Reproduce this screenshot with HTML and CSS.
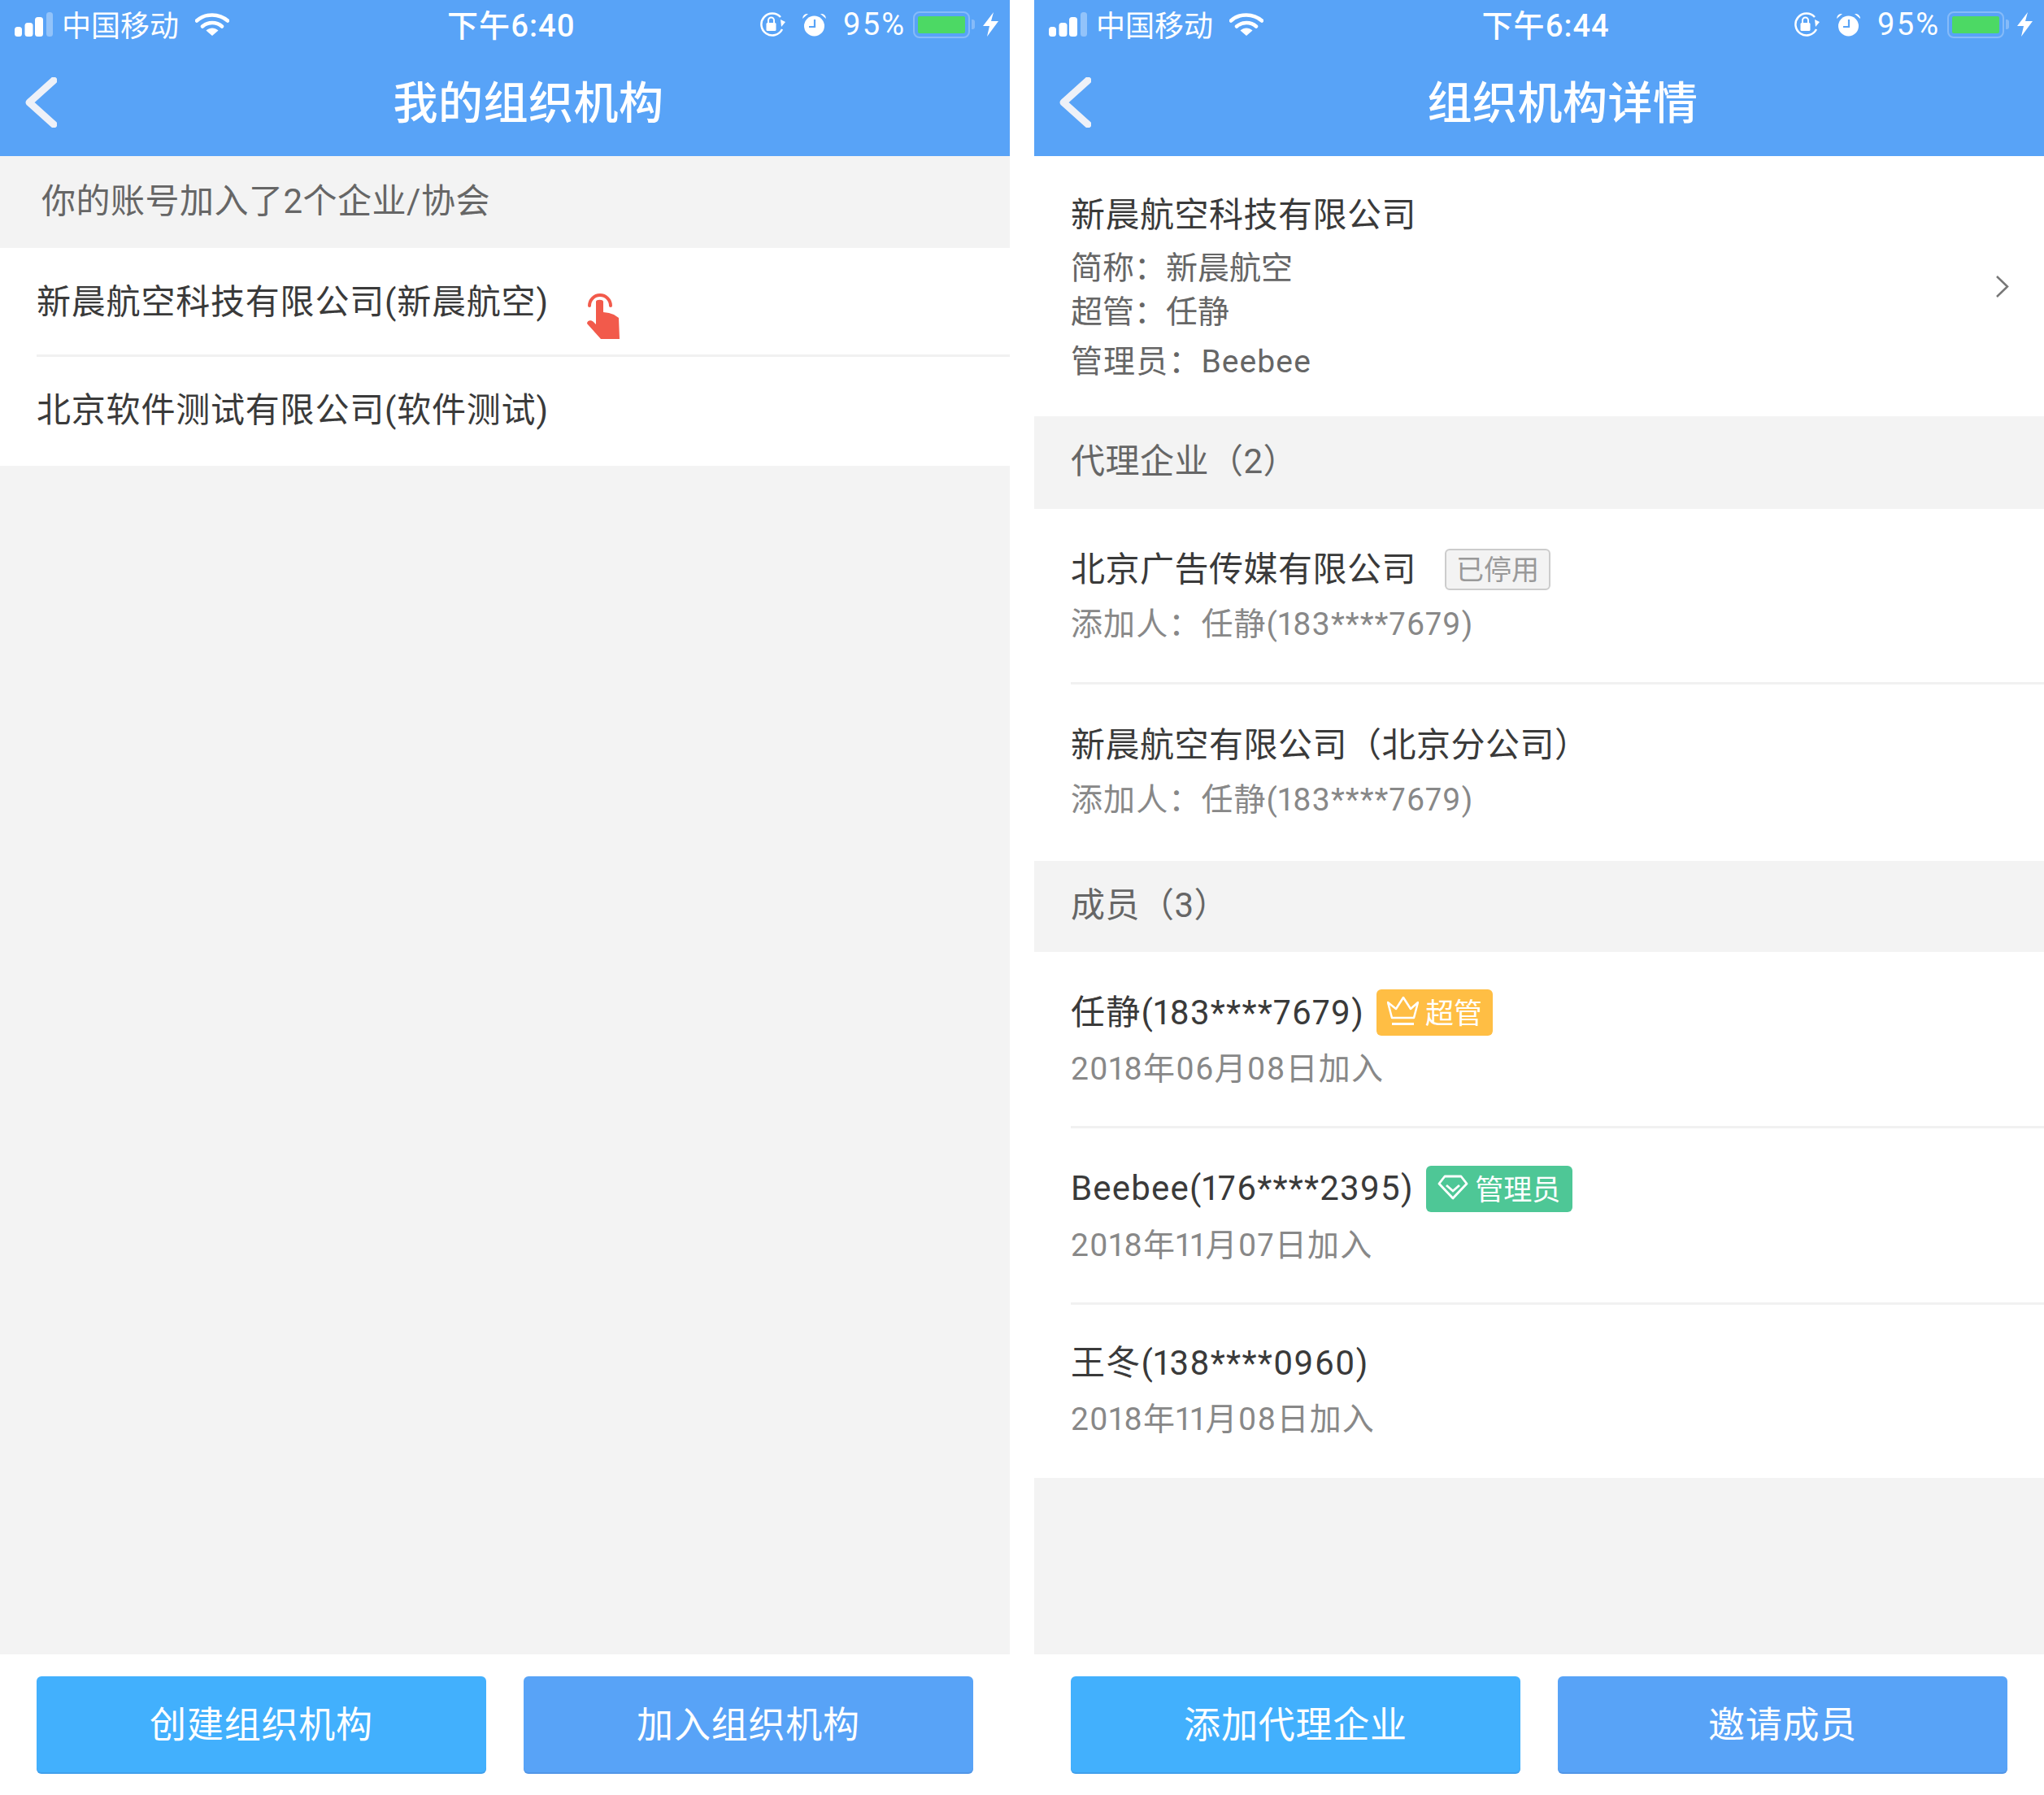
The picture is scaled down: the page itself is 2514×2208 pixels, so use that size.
FILE: index.html
```html
<!DOCTYPE html>
<html lang="zh-CN">
<head>
    <meta charset="UTF-8">
    <title>组织机构</title>
    <link rel="stylesheet" href="styles.css">
</head>
<body>
    <!-- 我的组织机构 -->
    <div class="phone">
        <div class="top-bar">
            <div class="status-bar">
                <div class="status-left">
                    <svg class="signal" width="47" height="30" viewBox="0 0 47 30"><rect x="0" y="18" width="9" height="12" rx="3.5" fill="#fff"/><rect x="12.500" y="13" width="10" height="17" rx="3.500" fill="#fff"/><rect x="25" y="6" width="10" height="24" rx="3.500" fill="#fff"/><rect x="39" y="0" width="8" height="30" rx="3.500" fill="#fff" opacity="0.35"/></svg>
                    <span class="carrier">中国移动</span>
                    <svg class="wifi" width="42" height="28" viewBox="0 0 42 28"><path d="M2 9.500C12.500 0 29.500 0 40 9.500" fill="none" stroke="#fff" stroke-width="4.500" stroke-linecap="round"/><path d="M9 16.500C15.500 10.500 26.500 10.500 33 16.500" fill="none" stroke="#fff" stroke-width="4.500" stroke-linecap="round"/><path d="M13.500 21.500C18 17.500 24 17.500 28.500 21.500L21 28Z" fill="#fff"/></svg>
                </div>
                <span class="clock">下午6:40</span>
                <div class="status-right">
                    <svg class="rotate-lock" width="34" height="30" viewBox="0 0 34 30"><path d="M29 21A13.500 13.500 0 1 1 27 6" fill="none" stroke="#fff" stroke-width="2.500"/><path d="M27 9L33 12L28 18Z" fill="#fff"/><rect x="9.500" y="13" width="12" height="10" rx="1.500" fill="#fff"/><path d="M12 13V10A3.500 3.500 0 0 1 19 10V13" fill="none" stroke="#fff" stroke-width="2"/></svg>
                    <svg class="alarm" width="31" height="30" viewBox="0 0 31 30"><circle cx="15.500" cy="17" r="12.500" fill="#fff"/><path d="M1 8A6 6 0 0 1 8 2Z M30 8A6 6 0 0 0 23 2Z" fill="#fff"/><path d="M16 9V18H9" fill="none" stroke="#58a3f7" stroke-width="2.200"/></svg>
                    <span class="battery-pct">95%</span>
                    <div class="battery"><div class="battery-fill"></div></div>
                    <span class="battery-nub"></span>
                    <svg class="bolt" width="19" height="30" viewBox="0 0 19 30"><path d="M13 0L0 17H8L5 30L19 11H10Z" fill="#fff"/></svg>
                </div>
            </div>
            <div class="nav">
                <svg class="back" width="40" height="62" viewBox="0 0 40 62"><path d="M36 4L6 31L36 58" fill="none" stroke="#eef1f8" stroke-width="9" stroke-linecap="round" stroke-linejoin="round"/></svg>
                <div class="nav-title">我的组织机构</div>
            </div>
        </div>
        <div class="content">
            <div class="section section-first">你的账号加入了2个企业/协会</div>
            <div class="org-list">
                <div class="org-item">
                    <span>新晨航空科技有限公司(新晨航空)</span>
                    <svg class="hand" width="40" height="59" viewBox="0 0 40 59"><path d="M3 18A13 13 0 0 1 29 18" fill="none" stroke="#f25a4b" stroke-width="4" stroke-linecap="round"/><path d="M11 13C11 10 20 10 20 13V26L27 27L33 29L39 33L40 59H17L0 40C0 36 5 35 8 38L11 41Z" fill="#f25a4b"/></svg>
                </div>
                <div class="org-item org-item-last">
                    <span>北京软件测试有限公司(软件测试)</span>
                </div>
            </div>
        </div>
        <div class="footer">
            <div class="btn btn-light">创建组织机构</div>
            <div class="btn">加入组织机构</div>
        </div>
    </div>

    <!-- 组织机构详情 -->
    <div class="phone">
        <div class="top-bar">
            <div class="status-bar">
                <div class="status-left">
                    <svg class="signal" width="47" height="30" viewBox="0 0 47 30"><rect x="0" y="18" width="9" height="12" rx="3.5" fill="#fff"/><rect x="12.500" y="13" width="10" height="17" rx="3.500" fill="#fff"/><rect x="25" y="6" width="10" height="24" rx="3.500" fill="#fff"/><rect x="39" y="0" width="8" height="30" rx="3.500" fill="#fff" opacity="0.35"/></svg>
                    <span class="carrier">中国移动</span>
                    <svg class="wifi" width="42" height="28" viewBox="0 0 42 28"><path d="M2 9.500C12.500 0 29.500 0 40 9.500" fill="none" stroke="#fff" stroke-width="4.500" stroke-linecap="round"/><path d="M9 16.500C15.500 10.500 26.500 10.500 33 16.500" fill="none" stroke="#fff" stroke-width="4.500" stroke-linecap="round"/><path d="M13.500 21.500C18 17.500 24 17.500 28.500 21.500L21 28Z" fill="#fff"/></svg>
                </div>
                <span class="clock">下午6:44</span>
                <div class="status-right">
                    <svg class="rotate-lock" width="34" height="30" viewBox="0 0 34 30"><path d="M29 21A13.500 13.500 0 1 1 27 6" fill="none" stroke="#fff" stroke-width="2.500"/><path d="M27 9L33 12L28 18Z" fill="#fff"/><rect x="9.500" y="13" width="12" height="10" rx="1.500" fill="#fff"/><path d="M12 13V10A3.500 3.500 0 0 1 19 10V13" fill="none" stroke="#fff" stroke-width="2"/></svg>
                    <svg class="alarm" width="31" height="30" viewBox="0 0 31 30"><circle cx="15.500" cy="17" r="12.500" fill="#fff"/><path d="M1 8A6 6 0 0 1 8 2Z M30 8A6 6 0 0 0 23 2Z" fill="#fff"/><path d="M16 9V18H9" fill="none" stroke="#58a3f7" stroke-width="2.200"/></svg>
                    <span class="battery-pct">95%</span>
                    <div class="battery"><div class="battery-fill"></div></div>
                    <span class="battery-nub"></span>
                    <svg class="bolt" width="19" height="30" viewBox="0 0 19 30"><path d="M13 0L0 17H8L5 30L19 11H10Z" fill="#fff"/></svg>
                </div>
            </div>
            <div class="nav">
                <svg class="back" width="40" height="62" viewBox="0 0 40 62"><path d="M36 4L6 31L36 58" fill="none" stroke="#eef1f8" stroke-width="9" stroke-linecap="round" stroke-linejoin="round"/></svg>
                <div class="nav-title">组织机构详情</div>
            </div>
        </div>
        <div class="content">
            <div class="company">
                <div class="company-info">
                    <div class="row-name">新晨航空科技有限公司</div>
                    <div class="company-line">简称：新晨航空</div>
                    <div class="company-line">超管：任静</div>
                    <div class="company-line company-line-last">管理员：Beebee</div>
                </div>
                <svg class="chevron" width="17" height="27" viewBox="0 0 17 27"><path d="M2 1L15 13.500L2 26" fill="none" stroke="#777" stroke-width="2.500"/></svg>
            </div>

            <div class="section section-agents">代理企业（2）</div>
            <div class="row">
                <div class="row-name">北京广告传媒有限公司<span class="tag tag-off">已停用</span></div>
                <div class="row-sub">添加人：任静(183****7679)</div>
            </div>
            <div class="row row-last">
                <div class="row-name">新晨航空有限公司（北京分公司）</div>
                <div class="row-sub">添加人：任静(183****7679)</div>
            </div>

            <div class="section">成员（3）</div>
            <div class="row member">
                <div class="row-name">任静(183****7679)<span class="tag tag-super">
                    <svg class="tag-icon" width="39" height="37" viewBox="0 0 39 37"><path d="M1 8L11 16L20 2L29 16L38 8L33 27H6Z" fill="none" stroke="#fff" stroke-width="2.500" stroke-linejoin="round"/><path d="M6 34.500H33" stroke="#fff" stroke-width="3"/></svg>超管</span></div>
                <div class="row-sub">2018年06月08日加入</div>
            </div>
            <div class="row member member-admin">
                <div class="row-name">Beebee(176****2395)<span class="tag tag-admin">
                    <svg class="tag-icon" width="38" height="31" viewBox="0 0 38 31"><path d="M9 2H29L36 11L19 29L2 11Z" fill="none" stroke="#fff" stroke-width="2.800" stroke-linejoin="round"/><path d="M11 13L19 20L27 13" fill="none" stroke="#fff" stroke-width="2.800"/></svg>管理员</span></div>
                <div class="row-sub">2018年11月07日加入</div>
            </div>
            <div class="row member row-last">
                <div class="row-name">王冬(138****0960)</div>
                <div class="row-sub">2018年11月08日加入</div>
            </div>
        </div>
        <div class="footer">
            <div class="btn btn-light">添加代理企业</div>
            <div class="btn">邀请成员</div>
        </div>
    </div>
</body>
</html>
```

FILE: styles.css
```css
* {
    margin: 0;
    padding: 0;
    box-sizing: border-box;
    font-family: Roboto, 'Noto Sans CJK SC', sans-serif;
    font-variant-numeric: proportional-nums;
}

body {
    display: flex;
    gap: 30px;
    width: 2514px;
    height: 2208px;
    background: #fff;
}

.phone {
    display: flex;
    flex-direction: column;
    width: 1242px;
    height: 2208px;
}

/* Top bar */
.top-bar {
    background: #58a3f7;
    color: #fff;
}

.status-bar {
    display: grid;
    grid-template-columns: 1fr auto 1fr;
    align-items: center;
    height: 60px;
    padding: 0 14px 0 18px;
}

.status-left, .status-right {
    display: flex;
    align-items: center;
}

.status-right {
    justify-content: flex-end;
}

.carrier {
    margin-left: 11px;
    padding-bottom: 2px;
    font-size: 36px;
}

.wifi {
    margin-left: 20px;
}

.clock {
    margin-left: 12px;
    padding-bottom: 4px;
    font-size: 38px;
    font-weight: 500;
    letter-spacing: 1px;
}

.alarm {
    margin-left: 19px;
}

.battery-pct {
    margin-left: 20px;
    font-size: 38px;
    letter-spacing: 2px;
}

.battery {
    width: 70px;
    height: 33px;
    margin-left: 9px;
    padding: 4px;
    border: 2px solid #86bbf9;
    border-radius: 8px;
}

.battery-fill {
    height: 100%;
    background: #4cd964;
    border-radius: 2px;
}

.battery-nub {
    width: 4px;
    height: 12px;
    margin-left: 2px;
    background: #86bbf9;
    border-radius: 0 3px 3px 0;
}

.bolt {
    margin-left: 10px;
}

.nav {
    display: flex;
    align-items: center;
    height: 132px;
    padding: 0 12px 0 30px;
}

.nav-title {
    flex: 1;
    padding-bottom: 8px;
    font-size: 55px;
    font-weight: 500;
    letter-spacing: 0.5px;
    text-align: center;
}

/* Content */
.content {
    flex: 1;
    background: #f3f3f3;
}

.section {
    display: flex;
    align-items: center;
    height: 112px;
    padding: 0 0 11px 45px;
    font-size: 42px;
    letter-spacing: 0.5px;
    color: #666;
}

.section-first {
    height: 113px;
    padding-left: 51px;
}

.section-agents {
    height: 114px;
}

.org-list {
    background: #fff;
}

.org-item {
    display: flex;
    align-items: center;
    height: 134px;
    margin-left: 45px;
    padding-bottom: 6px;
    border-bottom: 3px solid #f1f1f1;
    font-size: 42px;
    letter-spacing: 0.8px;
    color: #3a3a3a;
}

.org-item-last {
    padding-bottom: 12px;
    border-bottom: none;
}

.hand {
    align-self: flex-start;
    margin: 53px 0 0 47px;
}

.company {
    display: flex;
    align-items: center;
    justify-content: space-between;
    height: 320px;
    padding: 0 43px 0 45px;
    background: #fff;
}

.company-line {
    height: 54px;
    font-size: 39px;
    line-height: 58px;
    color: #666;
}

.company-line:nth-child(2) {
    margin-top: 7px;
}

.company-line-last {
    margin-top: 7px;
    letter-spacing: 1.1px;
}

.row {
    height: 216px;
    padding: 44px 0 0 45px;
    background: #fff;
    position: relative;
}

.member {
    height: 217px;
}

.member.row-last {
    height: 213px;
    padding-top: 41px;
}

.row-last {
    height: 217px;
}

.row::after {
    content: "";
    position: absolute;
    left: 45px;
    right: 0;
    bottom: 0;
    height: 3px;
    background: #f1f1f1;
}

.row-last::after {
    display: none;
}

.row-name {
    display: flex;
    align-items: center;
    height: 60px;
    padding-bottom: 8px;
    font-size: 42px;
    letter-spacing: 0.5px;
    color: #3a3a3a;
}

.member .row-name {
    letter-spacing: 1.2px;
}

.member-admin .row-name {
    padding-bottom: 2px;
}

.row-sub {
    height: 60px;
    margin-top: 7px;
    font-size: 39px;
    letter-spacing: 1.1px;
    line-height: 62px;
    color: #888;
}

.member .row-sub {
    margin-top: 10px;
    letter-spacing: 1.2px;
    line-height: 60px;
}

/* Tags */
.tag {
    display: flex;
    align-items: center;
    justify-content: center;
    margin: 8px 0 0 15px;
    padding-bottom: 3px;
    border-radius: 6px;
    font-size: 35px;
    letter-spacing: 0;
    color: #fff;
}

.tag-off {
    width: 130px;
    height: 51px;
    margin-left: 35px;
    background: #f3f3f3;
    border: 2px solid #ccc;
    font-size: 34px;
    color: #999;
}

.tag-super {
    width: 143px;
    height: 57px;
    background: #ffbe44;
}

.tag-admin {
    width: 180px;
    height: 57px;
    margin-top: 2px;
    background: #4ec796;
}

.tag-icon {
    margin-right: 8px;
}

/* Footer buttons */
.footer {
    display: flex;
    gap: 46px;
    height: 173px;
    padding: 27px 45px 26px;
    background: #fff;
}

.btn {
    flex: 1;
    height: 120px;
    background: #58a3f7;
    border-radius: 6px;
    box-shadow: inset 0 -2px 0 rgba(60, 100, 170, 0.2);
    font-size: 45px;
    letter-spacing: 0.8px;
    line-height: 122px;
    text-align: center;
    color: #fff;
}

.btn-light {
    background: #42b0fd;
}
```
